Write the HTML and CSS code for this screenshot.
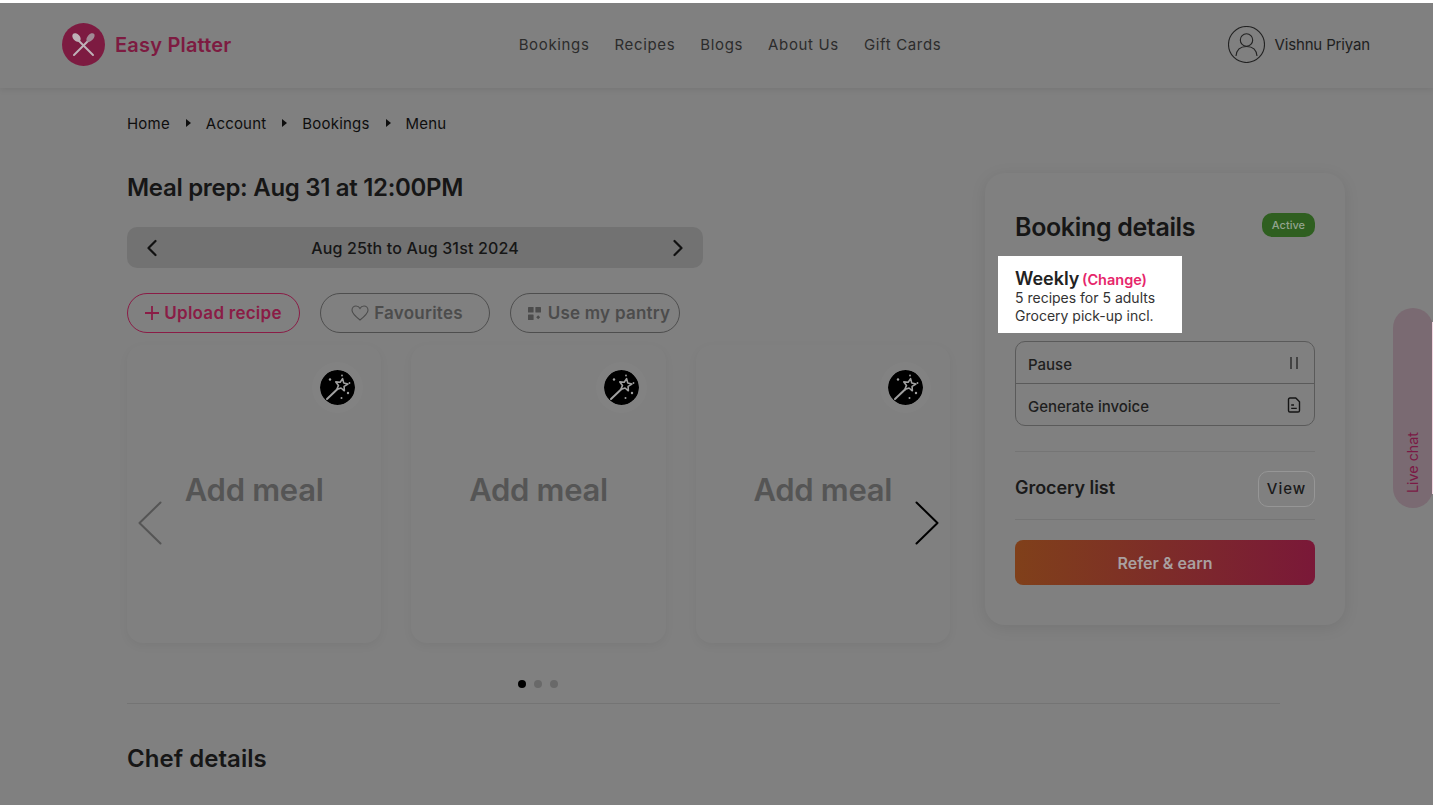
FILE: index.html
```html
<!DOCTYPE html>
<html lang="en">
<head>
    <meta charset="UTF-8">
    <meta name="viewport" content="width=device-width, initial-scale=1.0">
    <title>Easy Platter - Booking menu</title>
    <link rel="stylesheet" href="styles.css">
</head>
<body>
    <div class="page">
        <div class="navbar">
            <a class="logo" href="#">
                <svg class="logo-mark" viewBox="0 0 43 43">
                    <circle cx="21.5" cy="21.5" r="21.5" fill="#7d1b41"/>
                    <path d="M17 18 L31 32" stroke="#bfb2b8" stroke-width="2" stroke-linecap="round"/>
                    <ellipse cx="14.5" cy="14.5" rx="3.4" ry="5" transform="rotate(-42 14.5 14.5)" fill="#bfb2b8"/>
                    <path d="M26 18 L12 32" stroke="#bfb2b8" stroke-width="2" stroke-linecap="round"/>
                    <ellipse cx="28.5" cy="14.5" rx="3" ry="5.2" transform="rotate(42 28.5 14.5)" fill="#a08a95"/>
                </svg>
                <span>Easy Platter</span>
            </a>
            <div class="nav-links">
                <a href="#">Bookings</a>
                <a href="#">Recipes</a>
                <a href="#">Blogs</a>
                <a href="#">About Us</a>
                <a href="#">Gift Cards</a>
            </div>
            <a class="user" href="#">
                <svg class="user-icon" viewBox="0 0 37 37" fill="none" stroke="#222" stroke-width="1.1">
                    <circle cx="18.5" cy="18.5" r="18"/>
                    <circle cx="18.5" cy="14" r="6.2"/>
                    <path d="M8 30 C8.5 24 12.5 20.5 18.5 20.5 C24.5 20.5 28.5 24 29 30"/>
                </svg>
                <span>Vishnu Priyan</span>
            </a>
        </div>

        <div class="container">
            <div class="breadcrumb">
                <span>Home</span><i class="caret"></i>
                <span>Account</span><i class="caret"></i>
                <span>Bookings</span><i class="caret"></i>
                <span>Menu</span>
            </div>

            <div class="columns">
                <div class="menu-col">
                    <h1>Meal prep: Aug 31 at 12:00PM</h1>

                    <div class="week-bar">
                        <svg class="week-arrow" viewBox="0 0 12 18" fill="none" stroke="#111" stroke-width="2.2" stroke-linecap="round" stroke-linejoin="round"><path d="M9.5 2 L2.5 9 L9.5 16"/></svg>
                        <span>Aug 25th to Aug 31st 2024</span>
                        <svg class="week-arrow" viewBox="0 0 12 18" fill="none" stroke="#111" stroke-width="2.2" stroke-linecap="round" stroke-linejoin="round"><path d="M2.5 2 L9.5 9 L2.5 16"/></svg>
                    </div>

                    <div class="pills">
                        <a class="pill pill-upload" href="#">
                            <svg class="plus" viewBox="0 0 14 14" fill="none" stroke="#8a1c46" stroke-width="1.8"><path d="M7 0 V14 M0 7 H14"/></svg>
                            Upload recipe
                        </a>
                        <a class="pill pill-fav" href="#">
                            <svg class="heart" viewBox="0 0 18 16" fill="none" stroke="#4c4c4c" stroke-width="1.1"><path d="M9 15 C4 11 1 8.4 1 5.2 C1 2.8 2.9 1 5 1 C6.6 1 8.2 1.9 9 3.4 C9.8 1.9 11.4 1 13 1 C15.1 1 17 2.8 17 5.2 C17 8.4 14 11 9 15 Z"/></svg>
                            Favourites
                        </a>
                        <a class="pill pill-pantry" href="#">
                            <svg class="grid-icon" viewBox="0 0 13 13" fill="#4c4c4c"><rect width="5.6" height="5.6" rx="0.6"/><rect x="7.4" width="5.6" height="5.6" rx="0.6"/><rect y="7.4" width="5.6" height="5.6" rx="0.6"/><path d="M10.2 8.2 L12.2 10.2 L10.2 12.2 L8.2 10.2 Z"/></svg>
                            Use my pantry
                        </a>
                    </div>

                    <div class="carousel">
                        <div class="meal-row">
                            <div class="meal-card">
                                <svg class="wand" viewBox="0 0 35 35"><use href="#wand-icon"/></svg>
                                <h2>Add meal</h2>
                            </div>
                            <div class="meal-card">
                                <svg class="wand" viewBox="0 0 35 35"><use href="#wand-icon"/></svg>
                                <h2>Add meal</h2>
                            </div>
                            <div class="meal-card">
                                <svg class="wand" viewBox="0 0 35 35"><use href="#wand-icon"/></svg>
                                <h2>Add meal</h2>
                            </div>
                        </div>
                        <svg class="slide-arrow slide-prev" viewBox="0 0 24 44" fill="none" stroke="#555" stroke-width="2" stroke-linecap="round" stroke-linejoin="round"><path d="M22.5 1.5 L1.5 22 L22.5 42.5"/></svg>
                        <svg class="slide-arrow slide-next" viewBox="0 0 24 44" fill="none" stroke="#000" stroke-width="2" stroke-linecap="round" stroke-linejoin="round"><path d="M1.5 1.5 L22.5 22 L1.5 42.5"/></svg>
                    </div>

                    <div class="dots">
                        <span class="dot dot-on"></span>
                        <span class="dot"></span>
                        <span class="dot"></span>
                    </div>
                </div>

                <div class="booking-card">
                    <div class="booking-head">
                        <h2>Booking details</h2>
                        <span class="badge">Active</span>
                    </div>

                    <div class="plan">
                        <div class="plan-title">Weekly <a href="#">(Change)</a></div>
                        <div class="plan-line">5 recipes for 5 adults</div>
                        <div class="plan-line">Grocery pick-up incl.</div>
                    </div>

                    <div class="action-list">
                        <a class="action" href="#">
                            <span>Pause</span>
                            <svg class="action-icon" viewBox="0 0 16 16" fill="none" stroke="#2a2a2a" stroke-width="1.4"><path d="M5 2 V14 M11 2 V14"/></svg>
                        </a>
                        <a class="action" href="#">
                            <span>Generate invoice</span>
                            <svg class="action-icon" viewBox="0 0 16 16" fill="none" stroke="#141414" stroke-width="1.4" stroke-linejoin="round"><path d="M2.5 2.6 Q2.5 1 4 1 H9.8 L13.5 4.8 V13.4 Q13.5 15 12 15 H4 Q2.5 15 2.5 13.4 Z"/><path d="M5.2 8 H8 M5.2 11.4 H10.8"/></svg>
                        </a>
                    </div>

                    <div class="grocery">
                        <span>Grocery list</span>
                        <a class="view-btn" href="#">View</a>
                    </div>

                    <a class="refer" href="#">Refer &amp; earn</a>
                </div>
            </div>

            <div class="divider"></div>
            <h1 class="chef-title">Chef details</h1>
        </div>

        <a class="live-chat" href="#"><span>Live chat</span></a>
    </div>

    <svg class="sprites" width="0" height="0">
        <symbol id="wand-icon" viewBox="0 0 35 35">
            <circle cx="17.5" cy="17.5" r="17.5" fill="#000"/>
            <path d="M22.6 8.6 L23.7 12.9 L27.9 14.1 L24.1 16.4 L24.35 20.8 L21 18 L16.8 19.5 L18.5 15.4 L15.8 11.9 L20.2 12.3 Z" fill="none" stroke="#a0a0a0" stroke-width="1.6" stroke-linejoin="round"/>
            <path d="M17 19.5 L7 29" stroke="#a0a0a0" stroke-width="2" stroke-linecap="round"/>
            <g fill="#a0a0a0">
                <circle cx="10" cy="9.5" r="1.2"/>
                <circle cx="22" cy="5.5" r="0.9"/>
                <circle cx="29.5" cy="13" r="0.9"/>
                <circle cx="28" cy="23" r="1.2"/>
                <circle cx="21.5" cy="28" r="1"/>
            </g>
        </symbol>
    </svg>
</body>
</html>
```

FILE: styles.css
```css
* { box-sizing: border-box; }
html, body { height: 100%; }
body { margin: 0; padding-top: 3px; background-color: #fff; font-family: Inter, "Liberation Sans", sans-serif; color: #1a1a1a; overflow: hidden; }
a { color: inherit; text-decoration: none; }
h1, h2 { margin: 0; font-weight: 600; }
.sprites { position: absolute; }

.page { position: relative; height: 802px; background-color: #808080; overflow: hidden; }

.navbar { display: flex; justify-content: space-between; align-items: center; height: 85px; padding: 0 63px 2px 62px; box-shadow: 0 2px 6px rgba(0, 0, 0, 0.08); }
.logo { display: flex; align-items: center; gap: 10px; font-size: 20px; font-weight: 600; letter-spacing: 0.2px; color: #7d1b41; }
.logo-mark { width: 43px; height: 43px; }
.nav-links { display: flex; gap: 25px; font-size: 15px; color: #2c2c2c; letter-spacing: 0.65px; }
.user { display: flex; align-items: center; gap: 9px; font-size: 15px; letter-spacing: -0.15px; color: #1e1e1e; }
.user-icon { width: 37px; height: 37px; }

.container { padding-left: 127px; }
.breadcrumb { display: flex; align-items: center; height: 20px; margin-top: 25px; font-size: 15px; color: #0e0e0e; letter-spacing: 0.2px; }
.caret { width: 0; height: 0; margin: 0 15px 0 16px; border-left: 5px solid #0e0e0e; border-top: 4px solid transparent; border-bottom: 4px solid transparent; }

.columns { display: flex; gap: 35px; margin-top: 38px; }
.menu-col { width: 823px; }
h1 { font-size: 24px; line-height: 34px; letter-spacing: -0.3px; color: #161616; }

.week-bar { display: flex; justify-content: space-between; align-items: center; width: 576px; height: 41px; margin-top: 22px; padding: 0 19px; background-color: #727272; border-radius: 10px; font-size: 16px; font-weight: 500; letter-spacing: 0.15px; color: #161616; }
.week-arrow { width: 12px; height: 18px; }

.pills { display: flex; gap: 20px; margin-top: 25px; }
.pill { display: flex; justify-content: center; align-items: center; gap: 5px; height: 40px; border: 1px solid #4e4e4e; border-radius: 20px; font-size: 17px; font-weight: 600; letter-spacing: 0.25px; color: #4c4c4c; }
.pill-upload { width: 173px; border-color: #8a1c46; color: #8a1c46; }
.pill-fav { width: 170px; padding-left: 4px; }
.pill-pantry { width: 170px; gap: 7px; padding-left: 8px; }
.plus { width: 14px; height: 14px; }
.heart { width: 18px; height: 16px; }
.grid-icon { width: 13px; height: 13px; }

.carousel { position: relative; margin-top: 12px; }
.meal-row { display: flex; gap: 30px; }
.meal-card { position: relative; width: 254.5px; height: 298px; padding-top: 125px; border-radius: 16px; text-align: center; box-shadow: 0 3px 10px rgba(0, 0, 0, 0.05); }
.meal-card h2 { font-size: 31px; line-height: 40px; letter-spacing: -0.3px; color: #555; }
.wand { position: absolute; top: 25px; right: 26.5px; width: 35px; height: 35px; border-radius: 50%; box-shadow: 0 0 0 8px rgba(255, 255, 255, 0.02); }
.slide-arrow { position: absolute; top: 156px; width: 24px; height: 44px; }
.slide-prev { left: 11px; }
.slide-next { right: 11px; }

.dots { display: flex; justify-content: center; gap: 8px; width: 823px; margin-top: 37px; padding-right: 2px; }
.dot { width: 8px; height: 8px; border-radius: 50%; background-color: #696969; }
.dot-on { background-color: #000; }

.booking-card { width: 360px; height: 452px; margin-top: 2px; padding: 30px 30px 40px; border-radius: 20px; box-shadow: 0 3px 16px rgba(0, 0, 0, 0.09); }
.booking-head { display: flex; justify-content: space-between; align-items: center; height: 48px; }
.booking-head h2 { font-size: 25px; letter-spacing: -0.35px; color: #161616; }
.badge { margin-top: -4px; padding: 0 10px; height: 24px; line-height: 24px; border-radius: 10px; background-color: #2f5f20; font-size: 11px; font-weight: 500; color: #93a48f; }

.plan { width: 184px; height: 77px; margin: 5px 0 0 -17px; padding: 13px 0 0 17px; background-color: #fff; font-size: 14px; line-height: 18px; color: #333; }
.plan-title { font-size: 18px; line-height: 19px; font-weight: 600; color: #222; }
.plan-title a { margin-left: -2px; font-size: 14.5px; font-weight: 600; color: #e6266b; }

.action-list { margin-top: 8px; border: 1px solid #5a5a5a; border-radius: 10px; }
.action { display: flex; justify-content: space-between; align-items: center; height: 41px; padding: 3px 12px 0; font-size: 15px; font-weight: 500; color: #1e1e1e; }
.action + .action { border-top: 1px solid #5a5a5a; height: 42px; }
.action-icon { width: 16px; height: 16px; margin-top: -3px; }

.grocery { display: flex; justify-content: space-between; align-items: center; height: 69px; margin-top: 25px; padding-top: 6px; border-top: 1px solid #757575; border-bottom: 1px solid #757575; font-size: 18px; font-weight: 600; letter-spacing: -0.05px; color: #1a1a1a; }
.grocery span { margin-bottom: 2px; }
.view-btn { width: 57px; height: 36px; border: 1px solid #969696; border-radius: 10px; font-size: 15px; font-weight: 500; line-height: 34px; text-align: center; letter-spacing: 1px; color: #1a1a1a; }

.refer { display: block; height: 45px; margin-top: 20px; border-radius: 8px; background: linear-gradient(90deg, #80401a, #7a1838); font-size: 16px; font-weight: 600; line-height: 46px; text-align: center; color: #a9a0a0; }

.divider { width: 1153px; height: 1px; margin-top: 15px; background-color: #747474; }
.chef-title { margin-top: 38px; letter-spacing: 0.05px; }

.live-chat { position: absolute; top: 305px; right: 0; display: flex; flex-direction: column-reverse; align-items: center; width: 40px; height: 200px; padding: 0 1px 15px 0; border-radius: 20px; background-color: #7a6a72; font-size: 14.3px; color: #7a1a45; }
.live-chat::after { content: ""; position: absolute; top: 14px; right: 0; bottom: 14px; width: 1px; background-color: #f0d4df; }
.live-chat span { writing-mode: vertical-rl; transform: rotate(180deg); }
```
